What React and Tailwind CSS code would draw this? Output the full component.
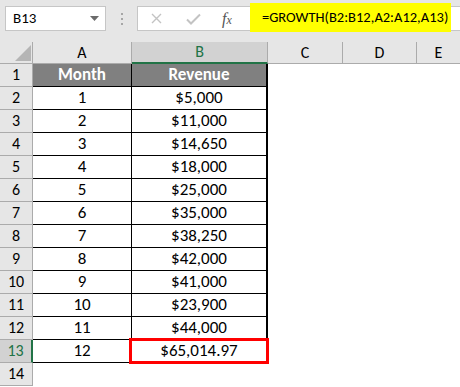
import React from "react";

const rows = [
  ["1", "$5,000"],
  ["2", "$11,000"],
  ["3", "$14,650"],
  ["4", "$18,000"],
  ["5", "$25,000"],
  ["6", "$35,000"],
  ["7", "$38,250"],
  ["8", "$42,000"],
  ["9", "$41,000"],
  ["10", "$23,900"],
  ["11", "$44,000"],
  ["12", "$65,014.97"],
];

export default function App() {
  const font = { fontFamily: "Carlito, 'Liberation Sans', Arial, sans-serif" };
  return (
    <div className="w-[460px] h-[387px] bg-white overflow-hidden text-black" style={font}>
      {/* toolbar */}
      <div className="h-[42px] bg-[#e6e6e6] flex items-start relative">
        <div className="mt-[6px] ml-[5px] w-[101px] h-[25px] bg-white border border-[#c6c6c6] flex items-center pl-[7px] pr-[6px] text-[15px]">
          <span className="flex-1">B13</span>
          <svg width="9" height="5" viewBox="0 0 9 5"><path d="M0 0h9L4.5 5z" fill="#6b6b6b" /></svg>
        </div>
        <div className="w-[31px] h-[37px] flex flex-col items-center justify-center gap-[3px]">
          <div className="w-[2px] h-[2px] bg-[#a6a6a6]" />
          <div className="w-[2px] h-[2px] bg-[#a6a6a6]" />
          <div className="w-[2px] h-[2px] bg-[#a6a6a6]" />
        </div>
        <div className="mt-[6px] h-[25px] flex-1 bg-white border border-[#c6c6c6] border-r-0 flex items-center">
          <div className="w-[113px] flex items-center h-full">
            <svg className="ml-[13px]" width="11" height="11" viewBox="0 0 11 11"><path d="M1 1L10 10M10 1L1 10" stroke="#c3c3c3" strokeWidth="1.4" /></svg>
            <svg className="ml-[24px]" width="15" height="12" viewBox="0 0 15 12"><path d="M1 6.5L5 10.5L14 1.5" stroke="#c3c3c3" strokeWidth="2" fill="none" /></svg>
            <span className="ml-[21px] italic text-[16px] text-[#555] leading-none" style={{ fontFamily: "'Liberation Serif', serif" }}>f<span className="text-[12px]">x</span></span>
          </div>
        </div>
        <div className="absolute left-[250px] top-[3px] w-[201px] h-[29px] bg-[#ffff00] flex items-center pl-[12px] text-[14.5px]">
          =GROWTH(B2:B12,A2:A12,A13)
        </div>
      </div>
      {/* column header */}
      <div className="flex h-[22px] text-[16px]">
        <div className="w-[33px] bg-[#e6e6e6] border-r border-b border-[#ababab] relative">
          <svg className="absolute left-[15px] top-[3px]" width="16" height="16" viewBox="0 0 16 16"><path d="M16 0V16H0z" fill="#b5b5b5" /></svg>
        </div>
        <div className="w-[99px] bg-[#e6e6e6] border-r border-b border-[#ababab] flex items-center justify-center">A</div>
        <div className="w-[136px] bg-[#d2d2d2] border-r border-[#ababab] border-b-2 border-b-[#217346] flex items-center justify-center text-[#217346]">B</div>
        <div className="w-[75px] bg-[#e6e6e6] border-r border-b border-[#ababab] flex items-center justify-center">C</div>
        <div className="w-[74px] bg-[#e6e6e6] border-r border-b border-[#ababab] flex items-center justify-center">D</div>
        <div className="flex-1 bg-[#e6e6e6] border-b border-[#ababab] flex items-center justify-center">E</div>
      </div>
      {/* row 1 */}
      <div className="flex h-[23px] text-[17px]">
        <div className="w-[33px] bg-[#e6e6e6] border-r border-b border-[#ababab] flex items-center justify-center text-[16px]">1</div>
        <div className="w-[99px] bg-[#808080] border-r border-b border-black flex items-center justify-center text-white font-bold">Month</div>
        <div className="w-[136px] bg-[#808080] border-r-2 border-b border-black flex items-center justify-center text-white font-bold">Revenue</div>
        <div className="flex-1" />
      </div>
      {rows.map(([m, r], i) => {
        const sel = i === 11;
        return (
          <div key={i} className="flex h-[23px] text-[17px]">
            <div className={sel ? "w-[33px] bg-[#d2d2d2] border-r-2 border-r-[#217346] border-b border-[#ababab] flex items-center justify-center text-[#217346] text-[16px]" : "w-[33px] bg-[#e6e6e6] border-r border-b border-[#ababab] flex items-center justify-center text-[16px]"}>{i + 2}</div>
            <div className="w-[99px] border-r border-b border-black flex items-center justify-center">{m}</div>
            <div className="w-[136px] border-r-2 border-b border-black flex items-center justify-center relative">
              {r}
              {sel && <div className="absolute left-[-3px] top-[-2px] w-[140px] h-[26px] border-[3px] border-[#ff0000]" />}
            </div>
            <div className="flex-1" />
          </div>
        );
      })}
      <div className="flex h-[23px] text-[16px]">
        <div className="w-[33px] bg-[#e6e6e6] border-r border-b border-[#ababab] flex items-center justify-center">14</div>
        <div className="flex-1" />
      </div>
    </div>
  );
}
